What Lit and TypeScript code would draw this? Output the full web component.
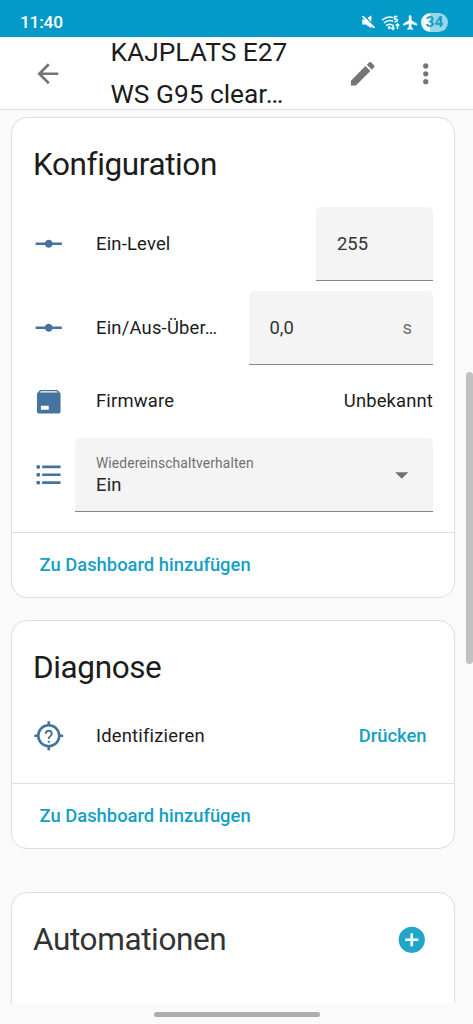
import { LitElement, html, css, svg } from "lit";
import { customElement } from "lit/decorators.js";

const icons = {
  back: "M20,11V13H8L13.5,18.5L12.08,19.92L4.16,12L12.08,4.08L13.5,5.5L8,11H20Z",
  pencil: "M20.71,7.04C21.1,6.65 21.1,6 20.71,5.63L18.37,3.29C18,2.9 17.35,2.9 16.96,3.29L15.12,5.12L18.87,8.87M3,17.25V21H6.75L17.81,9.93L14.06,6.18L3,17.25Z",
  dots: "M12,16A2,2 0 0,1 14,18A2,2 0 0,1 12,20A2,2 0 0,1 10,18A2,2 0 0,1 12,16M12,10A2,2 0 0,1 14,12A2,2 0 0,1 12,14A2,2 0 0,1 10,12A2,2 0 0,1 12,10M12,4A2,2 0 0,1 14,6A2,2 0 0,1 12,8A2,2 0 0,1 10,6A2,2 0 0,1 12,4Z",
  level: "M2,11H9.17C9.58,9.83 10.69,9 12,9C13.31,9 14.42,9.83 14.83,11H22V13H14.83C14.42,14.17 13.31,15 12,15C10.69,15 9.58,14.17 9.17,13H2V11Z",
  box: "M5.12,5H18.87L17.93,4H5.93L5.12,5M20.54,5.23C20.83,5.57 21,6 21,6.5V19A2,2 0 0,1 19,21H5A2,2 0 0,1 3,19V6.5C3,6 3.17,5.57 3.46,5.23L4.84,3.55C5.12,3.21 5.53,3 6,3H18C18.47,3 18.88,3.21 19.15,3.55L20.54,5.23M6,18H12V15H6V18Z",
  list: "M7,5H21V7H7V5M7,13V11H21V13H7M4,4.5A1.5,1.5 0 0,1 5.5,6A1.5,1.5 0 0,1 4,7.5A1.5,1.5 0 0,1 2.5,6A1.5,1.5 0 0,1 4,4.5M4,10.5A1.5,1.5 0 0,1 5.5,12A1.5,1.5 0 0,1 4,13.5A1.5,1.5 0 0,1 2.5,12A1.5,1.5 0 0,1 4,10.5M7,19V17H21V19H7M4,16.5A1.5,1.5 0 0,1 5.5,18A1.5,1.5 0 0,1 4,19.5A1.5,1.5 0 0,1 2.5,18A1.5,1.5 0 0,1 4,16.5Z",
  identify: "M20.95,11H23V13H20.95C20.5,17.17 17.17,20.5 13,20.95V23H11V20.95C6.83,20.5 3.5,17.17 3.05,13H1V11H3.05C3.5,6.83 6.83,3.5 11,3.05V1H13V3.05C17.17,3.5 20.5,6.83 20.95,11M12,5A7,7 0 0,0 5,12A7,7 0 0,0 12,19A7,7 0 0,0 19,12A7,7 0 0,0 12,5M12.75,17.25H11.25V15.75H12.75V17.25M12.75,14.5H11.25C11.25,12.06 13.5,12.25 13.5,10.5A1.5,1.5 0 0,0 12,9A1.5,1.5 0 0,0 10.5,10.5H9A3,3 0 0,1 12,7.5A3,3 0 0,1 15,10.5C15,12.38 12.75,12.63 12.75,14.5Z",
  menuDown: "M7,10L12,15L17,10H7Z",
  plus: "M17,13H13V17H11V13H7V11H11V7H13V11H17M12,2A10,10 0 0,0 2,12A10,10 0 0,0 12,22A10,10 0 0,0 22,12A10,10 0 0,0 12,2Z",
  plane: "M21,16V14L13,9V3.5A1.5,1.5 0 0,0 11.5,2A1.5,1.5 0 0,0 10,3.5V9L2,14V16L10,13.5V19L8,20.5V22L11.5,21L15,22V20.5L13,19V13.5L21,16Z",
};

const icon = (path: string, cls = "") =>
  html`<svg class="icon ${cls}" viewBox="0 0 24 24">${svg`<path d=${path}></path>`}</svg>`;

@customElement("app-root")
export class AppRoot extends LitElement {
  static styles = css`
    :host {
      display: flex;
      flex-direction: column;
      position: relative;
      width: 100%;
      height: 1024px;
      overflow: hidden;
      background: #fafafa;
      color: #1c1c1c;
      font-family: Roboto, sans-serif;
      font-size: 18.4px;
    }
    * { box-sizing: border-box; }
    .icon { width: 31.5px; height: 31.5px; fill: currentColor; flex: none; display: block; }
    .status {
      flex: none; height: 37px; padding: 7px 25px 0 20px;
      display: flex; align-items: center;
      background: #039ac8; color: #fff;
    }
    .clock { flex: 1; font-size: 17.3px; font-weight: 500; letter-spacing: -0.2px; }
    .mute { width: 15px; height: 14px; display: block; }
    .wifi { width: 20px; height: 16px; margin: 1px 1px 0 5px; display: block; }
    .icon.plane { width: 17px; height: 17px; }
    .plane path { stroke: currentColor; stroke-width: 0.8; }
    .battery {
      width: 27px; height: 19px; margin-left: 2px; border-radius: 10px;
      background: linear-gradient(90deg, #f2fbfe 34%, #9ad6ea 34%);
      color: #189fc9; font-size: 15.5px; font-weight: 700;
      display: grid; place-items: center;
    }
    header {
      flex: none; height: 73px; padding: 0 32px 0 32px;
      display: flex; align-items: center;
      background: #fff; color: #757575; border-bottom: 1px solid #dedede;
    }
    header .icon { margin-top: 1px; }
    .title {
      flex: 1; margin: 0 0 0 47px; color: #1c1c1c;
      font-size: 26.3px; line-height: 42px; font-weight: 400;
      white-space: nowrap;
    }
    header .pencil { margin-right: 31.5px; }
    main {
      flex: 1; min-height: 0; overflow: hidden;
      padding: 6.5px 18px 0 11px;
    }
    .card {
      background: #fff; border: 1px solid #dedede; border-radius: 16px;
      margin-bottom: 22px; display: flex; flex-direction: column;
    }
    .config { height: 481px; }
    .diag { height: 229px; margin-bottom: 43px; }
    .auto { height: 200px; }
    h1 { margin: 0; font-size: 31.5px; font-weight: 400; line-height: 48px; letter-spacing: -0.38px; }
    .body { flex: 1; padding: 23.5px 21px 0 21px; }
    .rows { display: flex; flex-direction: column; gap: 10.5px; }
    .config .rows { margin-top: 18px; }
    .diag .rows { margin-top: 17.5px; }
    .row { display: flex; align-items: center; height: 52.5px; }
    .row.tall { height: 73.5px; }
    .row .icon.state { color: #44739e; }
    .label {
      flex: 1; min-width: 0; margin: -1px 0 0 31.5px;
      letter-spacing: 0.2px; white-space: nowrap;
    }
    .reading { letter-spacing: 0.15px; margin-top: -1px; }
    .field {
      height: 73.5px; padding: 0 21px; color: #333;
      display: flex; align-items: center; justify-content: space-between;
      background: #f4f4f4; border-bottom: 1px solid #868686;
      border-radius: 5px 5px 0 0;
    }
    .narrow { width: 117px; }
    .wide { width: 184.5px; }
    .unit { color: #707070; }
    .select { flex: 1; margin-left: 10.5px; padding-right: 15.5px; color: #707070; }
    .float { font-size: 13.8px; line-height: 20px; letter-spacing: 0.13px; margin-top: 1px; }
    .value { color: #262626; line-height: 24px; letter-spacing: 0.2px; }
    .action { color: #169fc4; font-weight: 500; margin-top: -1px; }
    .press { padding-right: 6.5px; }
    footer {
      height: 65px; padding: 0 27.5px; border-top: 1px solid #dedede;
      display: flex; align-items: center;
    }
    .head { display: flex; align-items: center; justify-content: space-between; color: #333; }
    .plus { color: #22a5ca; margin-right: 5.5px; }
    .nav { flex: none; height: 21px; display: flex; justify-content: center; padding-top: 9px; }
    .pill { width: 166px; height: 5px; border-radius: 3px; background: #adadad; }
    .scroll {
      position: absolute; right: 0; top: 372px; width: 7px; height: 292px;
      border-radius: 4px; background: #c1c1c1;
    }
  `;

  render() {
    return html`
      <div class="status">
        <span class="clock">11:40</span>
        <svg class="mute" viewBox="0 0 16 15" fill="#fff">
          <path d="M1.300 4.800H5L11 .3V14.300L5 10.200H1.300Z"></path>
          <path d="M3 .6L15 12.400" stroke="#039ac8" stroke-width="1.600"></path>
          <path d="M1.500 1.200L14.300 13.900" stroke="#fff" stroke-width="1.900"></path>
        </svg>
        <svg class="wifi" viewBox="0 0 20 16" fill="none" stroke="#fff" stroke-width="1.5">
          <path d="M1 5.2Q6.500 .5 12 2.600M3 8Q7.500 4.200 12 6.200M5 10.600Q8 8.200 11 9.800M16.300 1.500H13.600V4Q16.500 3.600 16.300 5.500Q16 7 13.400 6.500M12 9.500V14.500M10.300 12.800L12 14.500L13.500 12.800M16.500 14V9M14.800 10.600L16.500 9L18.200 10.600"></path>
          <circle cx="8.300" cy="12.600" r=".8" fill="#fff"></circle>
        </svg>
        ${icon(icons.plane, "plane")}
        <span class="battery">34</span>
      </div>
      <header>
        ${icon(icons.back)}
        <div class="title">KAJPLATS E27<br />WS G95 clear…</div>
        ${icon(icons.pencil, "pencil")}${icon(icons.dots, "dots")}
      </header>
      <main>
        <section class="card config">
          <div class="body">
            <h1>Konfiguration</h1>
            <div class="rows">
              <div class="row tall">
                ${icon(icons.level, "state")}<span class="label">Ein-Level</span>
                <div class="field narrow">255</div>
              </div>
              <div class="row tall">
                ${icon(icons.level, "state")}<span class="label">Ein/Aus-Über…</span>
                <div class="field wide"><span>0,0</span><span class="unit">s</span></div>
              </div>
              <div class="row">
                ${icon(icons.box, "state")}<span class="label">Firmware</span><span class="reading">Unbekannt</span>
              </div>
              <div class="row tall">
                ${icon(icons.list, "state")}
                <div class="field select">
                  <div><div class="float">Wiedereinschaltverhalten</div><div class="value">Ein</div></div>
                  ${icon(icons.menuDown)}
                </div>
              </div>
            </div>
          </div>
          <footer><span class="action">Zu Dashboard hinzufügen</span></footer>
        </section>
        <section class="card diag">
          <div class="body">
            <h1>Diagnose</h1>
            <div class="rows">
              <div class="row">
                ${icon(icons.identify, "state")}<span class="label">Identifizieren</span>
                <span class="action press">Drücken</span>
              </div>
            </div>
          </div>
          <footer><span class="action">Zu Dashboard hinzufügen</span></footer>
        </section>
        <section class="card auto">
          <div class="body">
            <div class="head"><h1>Automationen</h1>${icon(icons.plus, "plus")}</div>
          </div>
        </section>
      </main>
      <div class="nav"><div class="pill"></div></div>
      <div class="scroll"></div>
    `;
  }
}
